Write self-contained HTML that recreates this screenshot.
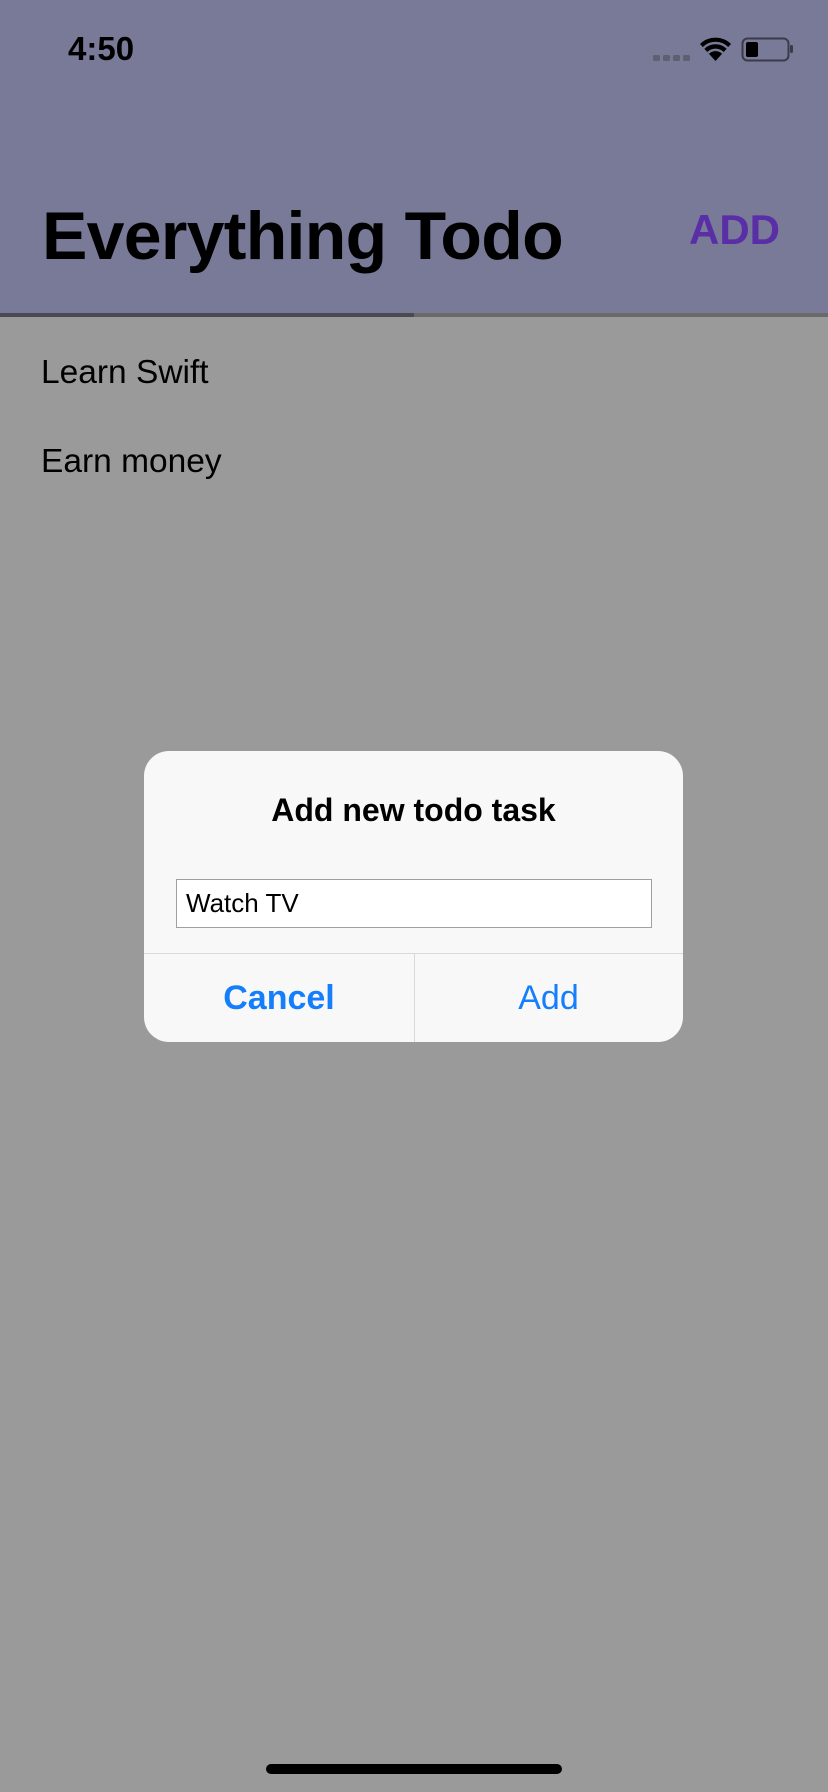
<!DOCTYPE html>
<html><head><meta charset="utf-8"><style>
*{margin:0;padding:0;box-sizing:border-box}
body{width:828px;height:1792px;background:#9a9a9a;position:relative;overflow:hidden;font-family:"Liberation Sans",sans-serif}
.hdr{position:absolute;left:0;top:0;width:828px;height:313px;background:#797a98}
.bar{position:absolute;top:313px;left:0;width:828px;height:4px;background:#6a6a6a}
.bar i{position:absolute;left:0;top:0;width:414px;height:4px;background:#4a4a52}
.t{position:absolute;white-space:nowrap;line-height:1}
.dlg{position:absolute;left:144px;top:751px;width:539px;height:291px;background:#f8f8f8;border-radius:25px;overflow:hidden}
</style></head><body>
<div class="hdr"></div>
<div class="bar"><i></i></div>
<div class="t" style="left:68px;top:32px;font-size:33px;font-weight:bold;color:#000">4:50</div>
<svg style="position:absolute;left:650px;top:34px" width="150" height="30" viewBox="650 34 150 30">
 <rect x="653" y="55" width="7" height="6" rx="1.5" fill="#5e5f70"/>
 <rect x="663" y="55" width="7" height="6" rx="1.5" fill="#5e5f70"/>
 <rect x="673" y="55" width="7" height="6" rx="1.5" fill="#5e5f70"/>
 <rect x="683" y="55" width="7" height="6" rx="1.5" fill="#5e5f70"/>
 <path d="M715.5 61 L700 44 A22 22 0 0 1 731 44 Z" fill="#000"/>
 <path d="M703.5 48 A17 17 0 0 1 727.5 48" stroke="#797a98" stroke-width="2.5" fill="none"/>
 <path d="M708 53 A10.5 10.5 0 0 1 723 53" stroke="#797a98" stroke-width="2.5" fill="none"/>
 <rect x="742.5" y="38.5" width="46" height="22" rx="5" fill="none" stroke="#3a3a48" stroke-width="2"/>
 <rect x="746" y="42" width="12" height="15" rx="2" fill="#000"/>
 <rect x="790" y="45" width="3" height="8" rx="1.5" fill="#3a3a48"/>
</svg>
<div class="t" style="left:42px;top:202px;font-size:68px;font-weight:bold;color:#000;letter-spacing:-0.7px">Everything Todo</div>
<div class="t" style="left:689px;top:209px;font-size:42px;font-weight:bold;color:#5a2ea6">ADD</div>
<div class="t" style="left:41px;top:356px;font-size:33.5px;color:#000">Learn Swift</div>
<div class="t" style="left:41px;top:445px;font-size:33.5px;color:#000">Earn money</div>
<div class="dlg">
 <div class="t" style="left:0;width:539px;text-align:center;top:43px;font-size:32px;font-weight:bold;color:#000">Add new todo task</div>
 <div style="position:absolute;left:32px;top:128px;width:476px;height:49px;background:#fff;border:1px solid #a0a0a0"></div>
 <div class="t" style="left:42px;top:139px;font-size:26px;color:#000">Watch TV</div>
 <div style="position:absolute;left:0;top:202px;width:539px;height:1px;background:#d8d8d8"></div>
 <div style="position:absolute;left:270px;top:202px;width:1px;height:89px;background:#d8d8d8"></div>
 <div class="t" style="left:0;width:270px;text-align:center;top:230px;font-size:34px;font-weight:bold;color:#147efb">Cancel</div>
 <div class="t" style="left:270px;width:269px;text-align:center;top:230px;font-size:34px;color:#147efb">Add</div>
</div>
<div style="position:absolute;left:266px;top:1764px;width:296px;height:10px;border-radius:5px;background:#000"></div>
</body></html>
